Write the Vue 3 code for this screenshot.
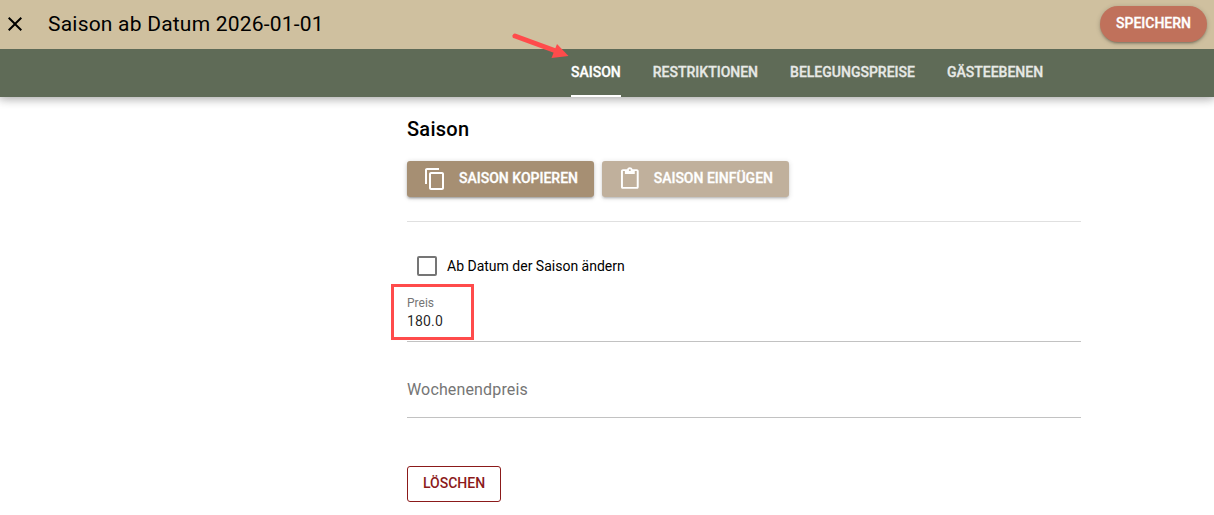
<script setup>
import { ref } from 'vue';

const tabs = ['Saison', 'Restriktionen', 'Belegungspreise', 'Gästeebenen'];
const activeTab = ref('Saison');
const changeFromDate = ref(false);
const price = ref('180.0');
const weekendPrice = ref('');
</script>

<template>
  <div class="dialog">
    <header class="header">
      <div class="toolbar">
        <button class="close-btn" title="Schließen">
          <svg viewBox="0 0 24 24" width="24" height="24">
            <path d="M19 6.41 17.59 5 12 10.59 6.41 5 5 6.41 10.59 12 5 17.59 6.41 19 12 13.41 17.59 19 19 17.59 13.41 12z" />
          </svg>
        </button>
        <div class="title">Saison ab Datum 2026-01-01</div>
        <button class="btn save-btn"><span>Speichern</span></button>
      </div>
      <nav class="tabs">
        <button
          v-for="tab in tabs"
          :key="tab"
          class="tab"
          :class="{ active: tab === activeTab }"
          @click="activeTab = tab"
        >
          <span>{{ tab }}</span>
        </button>
      </nav>
    </header>

    <main class="content">
      <h2 class="section-title">Saison</h2>
      <div class="actions">
        <button class="btn action-btn">
          <svg viewBox="0 0 24 24" width="24" height="24">
            <path d="M16 1H4c-1.1 0-2 .9-2 2v14h2V3h12V1zm3 4H8c-1.1 0-2 .9-2 2v14c0 1.1.9 2 2 2h11c1.1 0 2-.9 2-2V7c0-1.1-.9-2-2-2zm0 16H8V7h11v14z" />
          </svg>
          <span>Saison kopieren</span>
        </button>
        <button class="btn action-btn" disabled>
          <svg viewBox="0 0 24 24" width="24" height="24">
            <path d="M19 2h-4.18C14.4.84 13.3 0 12 0c-1.3 0-2.4.84-2.82 2H5c-1.1 0-2 .9-2 2v16c0 1.1.9 2 2 2h14c1.1 0 2-.9 2-2V4c0-1.1-.9-2-2-2zm-7 0c.55 0 1 .45 1 1s-.45 1-1 1-1-.45-1-1 .45-1 1-1zm7 18H5V4h2v3h10V4h2v16z" />
          </svg>
          <span>Saison einfügen</span>
        </button>
      </div>
      <hr class="separator" />

      <label class="checkbox">
        <input v-model="changeFromDate" type="checkbox" />
        <span>Ab Datum der Saison ändern</span>
      </label>

      <label class="field price-field">
        <span class="field-label">Preis</span>
        <input v-model="price" type="text" />
        <span class="highlight"></span>
      </label>
      <label class="field weekend-field">
        <input v-model="weekendPrice" type="text" placeholder="Wochenendpreis" />
      </label>

      <button class="btn delete-btn"><span>Löschen</span></button>
    </main>

    <!-- Arrow pointing at the active tab -->
    <svg class="arrow" viewBox="0 0 60 30" width="60" height="30">
      <path d="M5 6 L46 21" />
      <polygon points="47,14 58.500,26 41.500,28" />
    </svg>
  </div>
</template>

<style>
body {
  margin: 0;
  background: #fff;
}
</style>

<style scoped>
.dialog {
  position: relative;
  height: 515px;
  overflow: hidden;
  font-family: Roboto, 'Liberation Sans', sans-serif;
  font-size: 14px;
  color: #000;
}

.dialog * { box-sizing: border-box; }

button {
  font-family: inherit;
  border: 0;
  cursor: pointer;
}
svg { fill: currentColor; }

/* Header */
.header {
  box-shadow: 0 0 10px 2px rgba(0,0,0,0.2), 0 0 10px rgba(0,0,0,0.24);
}

.toolbar {
  height: 49px;
  display: flex;
  align-items: center;
  padding: 0 7px 0 3px;
  background: #cfc09f;
}
.close-btn {
  display: flex;
  padding: 0;
  margin-top: -1px;
  background: none;
  color: #000;
}
.title {
  flex: 1;
  margin: -1px 0 0 21px;
  font-size: 21px;
  line-height: 32px;
  letter-spacing: 0.21px;
}

.btn {
  display: flex;
  align-items: center;
  justify-content: center;
  height: 36px;
  font-size: 14px;
  font-weight: 500;
  line-height: 24px;
  text-transform: uppercase;
  white-space: nowrap;
  color: #fff;
  border-radius: 3px;
  box-shadow: 0 1px 5px rgba(0,0,0,0.2), 0 2px 2px rgba(0,0,0,0.14), 0 3px 1px -2px rgba(0,0,0,0.12);
  -webkit-text-stroke: 0.3px;
}
.btn span { margin-top: -2px; }
.save-btn {
  width: 107px;
  padding: 0;
  background: #c0715b;
  border-radius: 28px;
  margin-top: -1px;
}

.tabs {
  display: flex;
  height: 48px;
  padding-left: 555px;
  background: #5f6b57;
}
.tab {
  padding: 0 16px;
  background: none;
  color: #fff;
  font-size: 14px;
  font-weight: 500;
  text-transform: uppercase;
  -webkit-text-stroke: 0.3px;
}
.tab span {
  display: flex;
  align-items: center;
  height: 48px;
  border-bottom: 2px solid transparent;
  opacity: 0.85;
}
.tab.active span {
  opacity: 1;
  border-color: #fff;
}

/* Form */
.content {
  width: 674px;
  margin-left: 407px;
  padding-top: 16px;
}
.section-title {
  margin: 0;
  font-size: 20px;
  font-weight: 500;
  line-height: 32px;
  letter-spacing: 0.25px;
}
.actions {
  display: flex;
  gap: 8px;
  margin-top: 16px;
}
.action-btn {
  width: 187px;
  padding: 0 16px;
  gap: 12px;
  justify-content: flex-start;
  background: #a68f73;
}
.action-btn:disabled {
  opacity: 0.7;
  cursor: default;
}
.separator {
  height: 1px;
  margin: 24px 0;
  border: 0;
  background: #e0e0e0;
}

.checkbox {
  display: flex;
  align-items: center;
  gap: 10px;
  height: 40px;
  padding-left: 10px;
}
.checkbox input {
  appearance: none;
  width: 20px;
  height: 20px;
  margin: 0;
  border: 2px solid #757575;
  border-radius: 2px;
}
.checkbox input:checked { background: #5f6b57; }

.field {
  position: relative;
  display: flex;
  flex-direction: column;
  height: 56px;
  border-bottom: 1px solid #c2c2c2;
}
.field input {
  width: 100%;
  padding: 0;
  border: 0;
  outline: 0;
  background: none;
  font-family: inherit;
  color: rgba(0,0,0,0.87);
}
.price-field { padding-top: 9px; }
.price-field input {
  height: 20px;
  font-size: 14px;
  letter-spacing: 0.15px;
}
.field-label {
  height: 16px;
  font-size: 12px;
  line-height: 16px;
  color: #757575;
}
.weekend-field {
  margin-top: 20px;
}
.weekend-field input {
  height: 56px;
  font-size: 16px;
  letter-spacing: 0.15px;
}
.weekend-field input::placeholder { color: #757575; opacity: 1; }

.delete-btn {
  width: 94px;
  margin-top: 48px;
  padding: 0;
  background: #fff;
  color: #8b1a1a;
  border: 1px solid #8b1a1a;
  box-shadow: none;
  -webkit-text-stroke: 0;
}

/* Annotations over the form */
.highlight {
  position: absolute;
  top: -2px;
  left: -16px;
  width: 83px;
  height: 56px;
  border: 3px solid #ff4b4b;
}
.arrow {
  position: absolute;
  top: 30px;
  left: 510px;
  fill: #ff4b4b;
}
.arrow path {
  stroke: #ff4b4b;
  stroke-width: 5;
  stroke-linecap: round;
}
</style>
